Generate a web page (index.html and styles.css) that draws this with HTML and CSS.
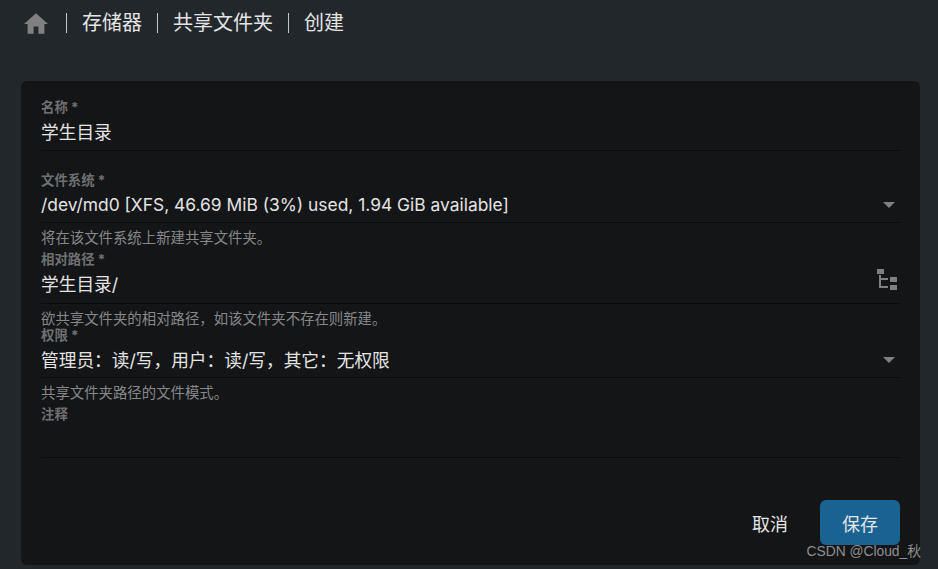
FILE: index.html
```html
<!DOCTYPE html>
<html lang="zh">
<head>
<meta charset="UTF-8" />
<title>创建共享文件夹</title>
<link rel="stylesheet" href="styles.css">
</head>
<body>
  <nav class="crumbs">
    <svg class="home" viewBox="2 3 20 17" width="24" height="21"><path d="M10 20v-6h4v6h5v-8h3L12 3 2 12h3v8z" fill="#808080"/></svg>
    <span class="crumb">存储器</span>
    <span class="crumb">共享文件夹</span>
    <span class="crumb">创建</span>
  </nav>

  <form class="card">
    <div class="field">
      <label>名称 *</label>
      <div class="value name cjk">学生目录</div>
    </div>

    <div class="field first-select">
      <label>文件系统 *</label>
      <div class="value">/dev/md0 [XFS, 46.69 MiB (3%) used, 1.94 GiB available]<i class="caret"></i></div>
      <p class="hint">将在该文件系统上新建共享文件夹。</p>
    </div>

    <div class="field path">
      <label>相对路径 *</label>
      <div class="value cjk">学生目录/
        <svg class="tree" viewBox="0 0 20 21" width="20" height="21">
          <g fill="#808080">
            <rect x="0" y="0" width="7" height="5"/>
            <rect x="13" y="8" width="7" height="5"/>
            <rect x="13" y="16" width="7" height="5"/>
            <rect x="2" y="6" width="2" height="13"/>
            <rect x="2" y="9" width="9" height="2"/>
            <rect x="2" y="17" width="9" height="2"/>
          </g>
        </svg>
      </div>
      <p class="hint">欲共享文件夹的相对路径，如该文件夹不存在则新建。</p>
    </div>

    <div class="field">
      <label>权限 *</label>
      <div class="value cjk">管理员：读/写，用户：读/写，其它：无权限<i class="caret"></i></div>
      <p class="hint">共享文件夹路径的文件模式。</p>
    </div>

    <div class="field">
      <label>注释</label>
      <div class="value name"></div>
    </div>

    <div class="actions">
      <button type="button" class="btn">取消</button>
      <button type="button" class="btn primary">保存</button>
    </div>
  </form>

  <div class="watermark">CSDN @Cloud_秋</div>
</body>
</html>
```

FILE: styles.css
```css
body {
  margin: 0;
  height: 569px;
  overflow: hidden;
  position: relative;
  background: #22272b;
  color: #e4e4e4;
  font-family: Inter, "Noto Sans CJK SC", sans-serif;
}
.crumbs {
  display: flex;
  align-items: center;
  height: 46px;
  padding-left: 24px;
}
.home {
  margin-right: 18px;
}
.crumb {
  font-size: 20px;
  line-height: 20px;
  padding-left: 15px;
  padding-right: 15px;
  border-left: 1px solid #c8c8c8;
}
.card {
  margin: 35px 18px 0 21px;
  height: 484px;
  box-sizing: border-box;
  padding: 16px 20px 0 20px;
  background: #141517;
  border-radius: 6px;
}
.field label {
  display: block;
  font-size: 13.4px;
  line-height: 20px;
  font-weight: 700;
  color: #6f7072;
}
.value {
  position: relative;
  height: 32px;
  line-height: 29px;
  font-size: 17.4px;
  border-bottom: 1px solid #0a0b0c;
}
.cjk {
  font-size: 17.7px;
  line-height: 31px;
}
.name {
  height: 33px;
  line-height: 32px;
}
.first-select {
  margin-top: 19px;
}
.path {
  margin-bottom: -5px;
}
.path .value {
  height: 34px;
  line-height: 32px;
}
.hint {
  margin: 0;
  font-size: 14.4px;
  line-height: 21px;
  padding: 4px 0 1px;
  color: #87888a;
}
.caret {
  position: absolute;
  right: 5px;
  bottom: 14px;
  width: 0;
  height: 0;
  border-left: 6px solid transparent;
  border-right: 6px solid transparent;
  border-top: 6px solid #808080;
}
.tree {
  position: absolute;
  right: 3px;
  top: 0;
}
.actions {
  display: flex;
  justify-content: flex-end;
  align-items: center;
  gap: 10px;
  margin-top: 42px;
}
.btn {
  width: 80px;
  height: 45px;
  padding: 0;
  border: none;
  border-radius: 6px;
  background: none;
  color: #e4e4e4;
  font: inherit;
  font-size: 18px;
}
.primary {
  background: #1a6291;
}
.watermark {
  position: absolute;
  right: 17px;
  bottom: 8px;
  font-family: "Liberation Sans", "Noto Sans CJK SC", sans-serif;
  font-size: 13.8px;
  line-height: 18px;
  color: #8f8f8f;
}
```
